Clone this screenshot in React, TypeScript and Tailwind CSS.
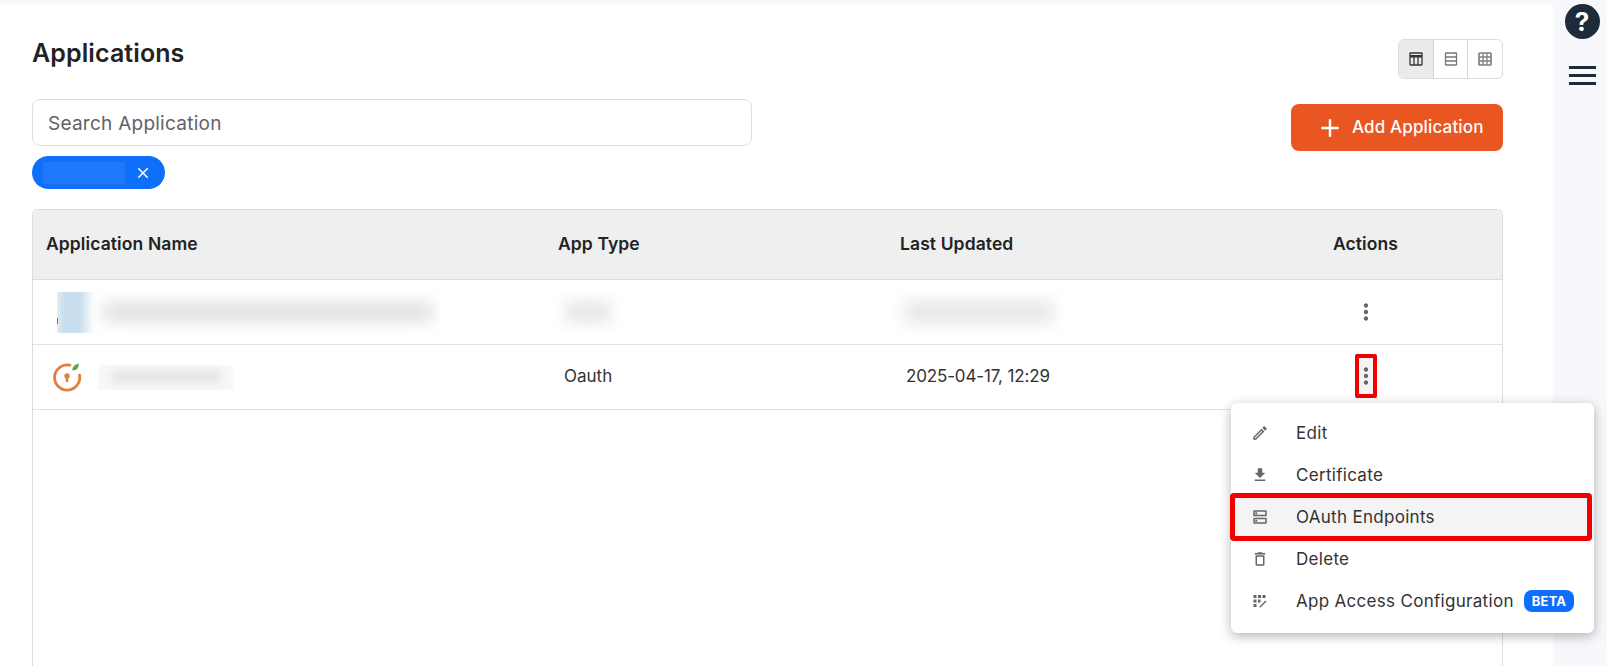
import { MdAdd, MdClose, MdMoreVert, MdOutlineEdit, MdFileDownload, MdOutlineDns, MdOutlineDelete } from "react-icons/md";

function TableIcon() {
  return (
    <svg width="14" height="14" viewBox="0 0 14 14" fill="none" stroke="#333" strokeWidth="1.3">
      <rect x="1" y="1" width="12" height="12" rx="0.5" />
      <path d="M1 4.2h12" strokeWidth="2.4" />
      <path d="M5 5v8M9 5v8" />
    </svg>
  );
}
function RowsIcon() {
  return (
    <svg width="14" height="14" viewBox="0 0 14 14" fill="none" stroke="#777" strokeWidth="1.3">
      <rect x="1.5" y="1" width="11" height="12" rx="0.5" />
      <path d="M1.500 5h11M1.500 9h11" />
    </svg>
  );
}
function GridIcon() {
  return (
    <svg width="14" height="14" viewBox="0 0 14 14" fill="none" stroke="#808080" strokeWidth="1.7">
      <rect x="1" y="1" width="12" height="12" rx="0.8" />
      <path d="M5 1v12M9 1v12M1 5h12M1 9h12" strokeWidth="1.3" />
    </svg>
  );
}
function AccessIcon() {
  return (
    <svg width="14" height="14" viewBox="0 0 14 14" fill="#666">
      <rect x="0.5" y="1" width="3" height="3" />
      <rect x="5" y="1" width="3" height="3" />
      <rect x="9.500" y="1" width="3" height="3" />
      <rect x="0.5" y="5.500" width="3" height="3" />
      <rect x="5" y="5.500" width="2.500" height="3" />
      <rect x="0.5" y="10" width="3" height="3" />
      <path d="M6 13l6.500-6.500 1 1L7.500 13.500z" />
    </svg>
  );
}
function Logo() {
  return (
    <svg width="32" height="32" viewBox="0 0 32 32" fill="none">
      <path d="M19 4.200A12.600 12.600 0 1 0 28.500 14" stroke="#e0803c" strokeWidth="2.800" strokeLinecap="round" />
      <circle cx="16" cy="15" r="2.700" fill="#e0803c" />
      <rect x="14.700" y="15" width="2.600" height="6" rx="0.6" fill="#e0803c" />
      <path d="M21.500 9.500c-.5-3 1.500-5.500 6-7 .5 3.500-1 6.500-6 7z" fill="#5da04a" />
    </svg>
  );
}

const items = [
  { label: "Edit", icon: <MdOutlineEdit size={18} /> },
  { label: "Certificate", icon: <MdFileDownload size={18} /> },
  { label: "OAuth Endpoints", icon: <MdOutlineDns size={18} />, active: true },
  { label: "Delete", icon: <MdOutlineDelete size={18} /> },
  { label: "App Access Configuration", icon: <AccessIcon />, beta: true },
];

export default function App() {
  return (
    <div className="flex h-[666px] w-[1607px] overflow-hidden bg-white font-['Inter',sans-serif] text-[#2b2b2b]">
      <main className="relative flex w-[1553px] flex-col pl-8 pr-[50px] shadow-[inset_0_10px_8px_-8px_rgba(0,0,0,0.06)]">
        <div className="flex h-[99px] items-start justify-between pt-[39px]">
          <h1 className="-mt-[1px] text-[25px] leading-[30px] font-semibold tracking-[0.1px] text-[#222]">Applications</h1>
          <div className="flex h-10 w-[105px] overflow-hidden rounded-md border border-[#dcdcdc]">
            <div className="flex flex-1 items-center justify-center border-r border-[#d4d4d4] bg-[#ebebeb]"><TableIcon /></div>
            <div className="flex flex-1 items-center justify-center border-r border-[#d4d4d4]"><RowsIcon /></div>
            <div className="flex flex-1 items-center justify-center"><GridIcon /></div>
          </div>
        </div>

        <div className="flex h-[110px] items-start justify-between">
          <div className="flex flex-col gap-[10px]">
            <div className="flex h-[47px] w-[720px] items-center rounded-lg border border-[#dedede] pt-[4px] pl-[15px] text-[19px] tracking-[0.25px] text-[#5f6368]">
              Search Application
            </div>
            <div className="flex h-[33px] w-[133px] items-center rounded-full bg-[#0f6ffb] pl-[11px]">
              <div className="h-[22px] w-[82px] bg-[#2078fb]" />
              <MdClose className="ml-[9px] text-white" size={18} />
            </div>
          </div>
          <button className="mt-[5px] flex h-[47px] w-[212px] items-center rounded-lg bg-[#e95622] pl-[24px] text-[17px] font-medium tracking-[0.15px] text-white">
            <MdAdd size={30} />
            <span className="ml-[7px]">Add Application</span>
          </button>
        </div>

        <div className="flex-1 rounded-t-md border border-b-0 border-[#dcdcdc]">
          <div className="grid h-[70px] grid-cols-[513px_342px_341px_1fr] items-center rounded-t-md border-b border-[#dcdcdc] bg-[#efefef] text-[17.5px] font-semibold tracking-[0.1px] text-[#222]">
            <div className="pl-[13px]">Application Name</div>
            <div className="pl-[12px]">App Type</div>
            <div className="pl-[12px]">Last Updated</div>
            <div className="text-center">Actions</div>
          </div>

          <div className="grid h-[65px] grid-cols-[513px_342px_341px_1fr] items-center border-b border-[#e2e2e2]">
            <div className="pl-6">
              <div className="relative flex h-[41px] w-[384px] items-center overflow-hidden">
                <div className="h-[60px] w-[30px] bg-[#c8dded] blur-[5px]" />
                <div className="absolute bottom-[9px] left-0 h-[6px] w-[1px] bg-[#2a7fb8]" />
                <div className="ml-4 h-[20px] w-[330px] rounded bg-[#e0e0e0] blur-[8px]" />
              </div>
            </div>
            <div className="flex h-[41px] w-[84px] items-center justify-center overflow-hidden">
              <div className="h-[22px] w-[46px] bg-[#e6e6e6] blur-[8px]" />
            </div>
            <div className="pl-[6px]">
              <div className="flex h-[41px] w-[170px] items-center justify-center overflow-hidden">
                <div className="h-[24px] w-[150px] bg-[#e8e8e8] blur-[8px]" />
              </div>
            </div>
            <div className="flex justify-center"><MdMoreVert size={26} className="text-[#666]" /></div>
          </div>

          <div className="grid h-[65px] grid-cols-[513px_342px_341px_1fr] items-center border-b border-[#e2e2e2] text-[17px] text-[#333]">
            <div className="flex items-center pl-[18px]">
              <Logo />
              <div className="ml-[15px] flex h-[25px] w-[135px] items-center justify-center overflow-hidden bg-[#f8f8f8]">
                <div className="h-3 w-[110px] bg-[#e4e4e4] blur-[4px]" />
              </div>
            </div>
            <div className="pl-[18px]">Oauth</div>
            <div className="pl-[18px] tracking-[-0.15px]">2025-04-17, 12:29</div>
            <div className="flex justify-center">
              <div className="-mt-[2px] flex h-[44px] w-[22px] items-center justify-center rounded-[2px] border-[4px] border-[#f20000] bg-[#f4f4f4]">
                <MdMoreVert size={26} className="shrink-0 text-[#666]" />
              </div>
            </div>
          </div>
        </div>
      </main>

      <aside className="flex w-[54px] flex-col items-center bg-[#f6f8fb] pt-[4px] pl-[4px]">
        <div className="flex h-[35px] w-[35px] items-center justify-center rounded-full bg-[#1d2b3a] text-[26px] font-bold text-white">?</div>
        <div className="mt-[27px] flex w-[27px] flex-col gap-[5px]">
          <div className="h-[3px] bg-[#1d2b3a]" />
          <div className="h-[3px] bg-[#1d2b3a]" />
          <div className="h-[3px] bg-[#1d2b3a]" />
        </div>
      </aside>

      <div className="absolute top-[403px] left-[1231px] w-[363px] rounded-md bg-white pt-[9px] pb-[11px] text-[17px] tracking-[0.3px] text-[#333] shadow-[0_3px_12px_rgba(0,0,0,0.3)]">
        {items.map((it) => (
          <div key={it.label} className={`relative flex h-[42px] items-center ${it.active ? "bg-[#f4f4f4]" : ""}`}>
            <span className="mr-[8px] flex w-[57px] justify-center text-[#666]">{it.icon}</span>
            <span className="pt-[2px]">{it.label}</span>
            {it.beta && (
              <span className="ml-[10px] rounded-lg bg-[#0f6ffb] px-[8px] py-[3px] text-[13px] leading-[16px] font-bold tracking-[0.2px] text-white">BETA</span>
            )}
            {it.active && <div className="absolute -top-[3px] right-[2px] -bottom-[3px] -left-[1px] rounded-sm border-[5px] border-[#f20000]" />}
          </div>
        ))}
      </div>
    </div>
  );
}
